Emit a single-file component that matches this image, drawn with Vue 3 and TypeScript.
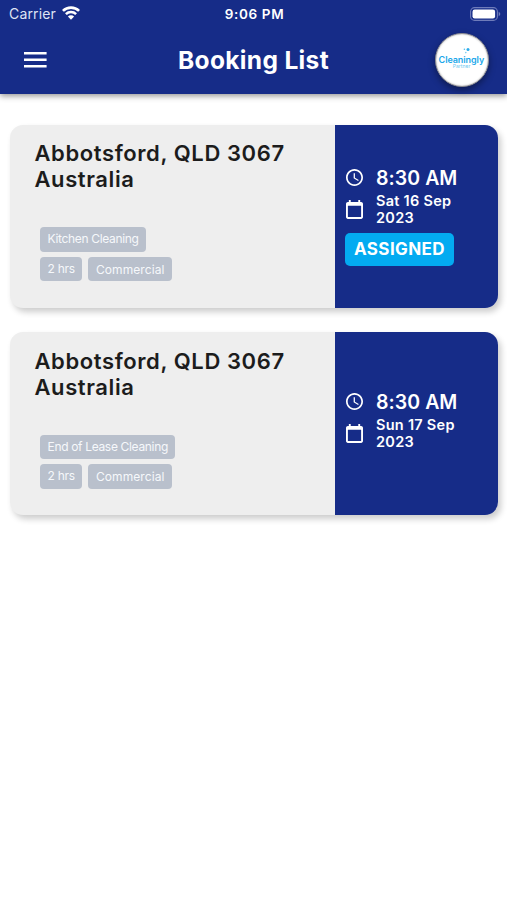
<script setup lang="ts">
interface Booking {
  id: number
  address: string[]
  service: string
  duration: string
  kind: string
  time: string
  date: string[]
  status?: string
}

const bookings: Booking[] = [
  {
    id: 1,
    address: ['Abbotsford, QLD 3067', 'Australia'],
    service: 'Kitchen Cleaning',
    duration: '2 hrs',
    kind: 'Commercial',
    time: '8:30 AM',
    date: ['Sat 16 Sep', '2023'],
    status: 'ASSIGNED',
  },
  {
    id: 2,
    address: ['Abbotsford, QLD 3067', 'Australia'],
    service: 'End of Lease Cleaning',
    duration: '2 hrs',
    kind: 'Commercial',
    time: '8:30 AM',
    date: ['Sun 17 Sep', '2023'],
  },
]
</script>

<template>
  <div class="screen">
    <header class="header">
      <div class="status">
        <div class="carrier">
          <span>Carrier</span>
          <svg class="wifi" viewBox="0 0 18 14" width="18" height="14" fill="none" stroke="#fff">
            <path d="M0.9 4.9A11.5 11.5 0 0 1 17.1 4.9" stroke-width="2.7" />
            <path d="M3.9 8.1A7.2 7.2 0 0 1 14.1 8.1" stroke-width="2.5" />
            <path d="M9 13.7L5.9 10.5A4.4 4.4 0 0 1 12.1 10.5Z" fill="#fff" stroke="none" />
          </svg>
        </div>
        <span class="clock">9:06 PM</span>
        <svg class="battery" viewBox="0 0 31 14" width="31" height="14">
          <rect x="0.6" y="0.6" width="26.8" height="12.8" rx="4" fill="none" stroke="#6f7cba" stroke-width="1.1" />
          <rect x="2.5" y="2.5" width="22.6" height="9" rx="2.2" fill="#fff" />
          <path d="M28.7 4.8Q30.3 5.6 30.3 7T28.7 9.2Z" fill="#6f7cba" />
        </svg>
      </div>
      <div class="toolbar">
        <svg class="menu" viewBox="0 0 23 16" width="23" height="16" fill="#fff">
          <path d="M0 0h22.6v2.5H0zM0 6.5h22.6v2.5H0zM0 13h22.6v2.5H0z" />
        </svg>
        <h1 class="title">Booking List</h1>
        <div class="avatar">
          <svg viewBox="0 0 52 52" width="52" height="52">
            <circle cx="28.4" cy="15.3" r="0.8" fill="#52bdec" />
            <circle cx="32" cy="15.6" r="1.5" fill="#2aacec" />
            <circle cx="29.8" cy="18.6" r="0.8" fill="#7ccdf0" />
            <text x="2.6" y="28.8" class="brand" textLength="45.6">Cleaningly</text>
            <text x="16.8" y="34.4" class="brand-sub" textLength="17.5">Partner</text>
          </svg>
        </div>
      </div>
    </header>

    <main class="list">
      <article v-for="b in bookings" :key="b.id" class="card">
        <div class="info">
          <h2 class="address">
            <span v-for="line in b.address" :key="line">{{ line }}</span>
          </h2>
          <div class="tags">
            <div class="tag-row">
              <span class="tag">{{ b.service }}</span>
            </div>
            <div class="tag-row">
              <span class="tag duration">{{ b.duration }}</span>
              <span class="tag kind">{{ b.kind }}</span>
            </div>
          </div>
        </div>
        <div class="schedule">
          <div class="time-row">
            <svg viewBox="2 2 20 20" width="17" height="17" fill="#fff">
              <path d="M11.99 2C6.47 2 2 6.48 2 12s4.47 10 9.99 10C17.52 22 22 17.52 22 12S17.52 2 11.99 2zM12 20c-4.42 0-8-3.58-8-8s3.58-8 8-8 8 3.58 8 8-3.58 8-8 8zm.5-13H11v6l5.25 3.15.75-1.23-4.5-2.67z" />
            </svg>
            <span class="time">{{ b.time }}</span>
          </div>
          <div class="date-row">
            <svg viewBox="3 1 18 20" width="17" height="19" fill="#fff">
              <path d="M19 3h-1V1h-2v2H8V1H6v2H5c-1.1 0-2 .9-2 2v14c0 1.1.9 2 2 2h14c1.1 0 2-.9 2-2V5c0-1.1-.9-2-2-2zm0 16H5V7h14v12z" />
            </svg>
            <span class="date">
              <span v-for="part in b.date" :key="part">{{ part }}</span>
            </span>
          </div>
          <div class="badge-slot">
            <span v-if="b.status" class="badge">{{ b.status }}</span>
          </div>
        </div>
      </article>
    </main>
  </div>
</template>

<style>
body {
  background: #fff;
}
</style>

<style scoped>
.screen {
  width: 507px;
  height: 900px;
  overflow: hidden;
  background: #fff;
  font-family: Inter, 'Liberation Sans', sans-serif;
}

.header {
  height: 93.5px;
  background: #162c88;
  color: #fff;
  box-shadow: 0 2px 6px rgba(0, 0, 0, 0.42);
}

.status {
  display: grid;
  grid-template-columns: 1fr auto 1fr;
  align-items: center;
  height: 27px;
  padding: 0 6px 0 9px;
}

.carrier {
  display: flex;
  align-items: center;
  gap: 6px;
  color: #dfe3f4;
  font-size: 14px;
  letter-spacing: 0.15px;
}

.wifi {
  margin-top: -2px;
}

.clock {
  font-size: 13.5px;
  font-weight: 600;
  letter-spacing: 0.65px;
  margin-left: -1px;
}

.battery {
  justify-self: end;
}

.toolbar {
  display: grid;
  grid-template-columns: 1fr auto 1fr;
  align-items: center;
  height: 66px;
  padding: 0 18px;
}

.menu {
  margin-left: 6px;
}

.title {
  margin: 0;
  font-size: 24.5px;
  line-height: 30px;
  font-weight: 700;
  letter-spacing: 0.35px;
}

.avatar {
  justify-self: end;
  box-sizing: border-box;
  width: 54px;
  height: 54px;
  border: 1px solid #8d8d92;
  border-radius: 50%;
  background: #fff;
  box-shadow: 0 3px 7px rgba(0, 0, 0, 0.4), inset 0 0 2px rgba(0, 0, 0, 0.35);
}

.avatar svg {
  display: block;
}

.brand {
  font-size: 9px;
  font-weight: 600;
  fill: #1aa7ea;
}

.brand-sub {
  font-size: 5px;
  fill: #6cc8f0;
}

.list {
  display: flex;
  flex-direction: column;
  gap: 24.5px;
  padding: 31px 9px 0 10px;
}

.card {
  display: flex;
  height: 183px;
  overflow: hidden;
  border-radius: 13px;
  background: #eeeeee;
  box-shadow: 3px 4px 6px rgba(0, 0, 0, 0.2);
}

.info {
  flex: 1;
  padding: 15.5px 0 0 24.5px;
}

.address {
  margin: 0;
  color: #1c1c1c;
  font-size: 22px;
  line-height: 26px;
  font-weight: 600;
  letter-spacing: 0.6px;
  white-space: nowrap;
}

.address span,
.date span {
  display: block;
}

.tags {
  display: flex;
  flex-direction: column;
  gap: 5px;
  padding: 35px 0 0 5.5px;
}

.tag-row {
  display: flex;
  gap: 6px;
}

.tag {
  box-sizing: border-box;
  height: 24.5px;
  padding: 0 7.5px;
  border-radius: 4px;
  background: #b9c0cc;
  color: #f6f8fb;
  font-size: 12px;
  line-height: 23.5px;
  letter-spacing: -0.33px;
  white-space: nowrap;
}

.duration {
  letter-spacing: -0.25px;
}

.kind {
  line-height: 25.5px;
  letter-spacing: 0.1px;
}

.schedule {
  box-sizing: border-box;
  display: flex;
  flex-direction: column;
  align-items: flex-start;
  justify-content: center;
  width: 163px;
  padding: 0 0 2px 10px;
  background: #162c88;
  color: #fff;
}

.time-row,
.date-row {
  display: flex;
  align-items: center;
  gap: 13px;
  padding-left: 1px;
}

.time {
  font-size: 19.5px;
  line-height: 26px;
  font-weight: 600;
  letter-spacing: 0.05px;
}

.date-row {
  padding-top: 2px;
}

.date {
  margin-top: -1px;
  margin-bottom: 1px;
  font-size: 14.5px;
  line-height: 17px;
  font-weight: 600;
  letter-spacing: 0.27px;
}

.badge-slot {
  display: flex;
  padding-top: 6px;
}

.badge {
  height: 33px;
  padding: 0 9px;
  border-radius: 5px;
  background: #03abf1;
  font-size: 17px;
  line-height: 33px;
  font-weight: 700;
  letter-spacing: 0.4px;
}
</style>
